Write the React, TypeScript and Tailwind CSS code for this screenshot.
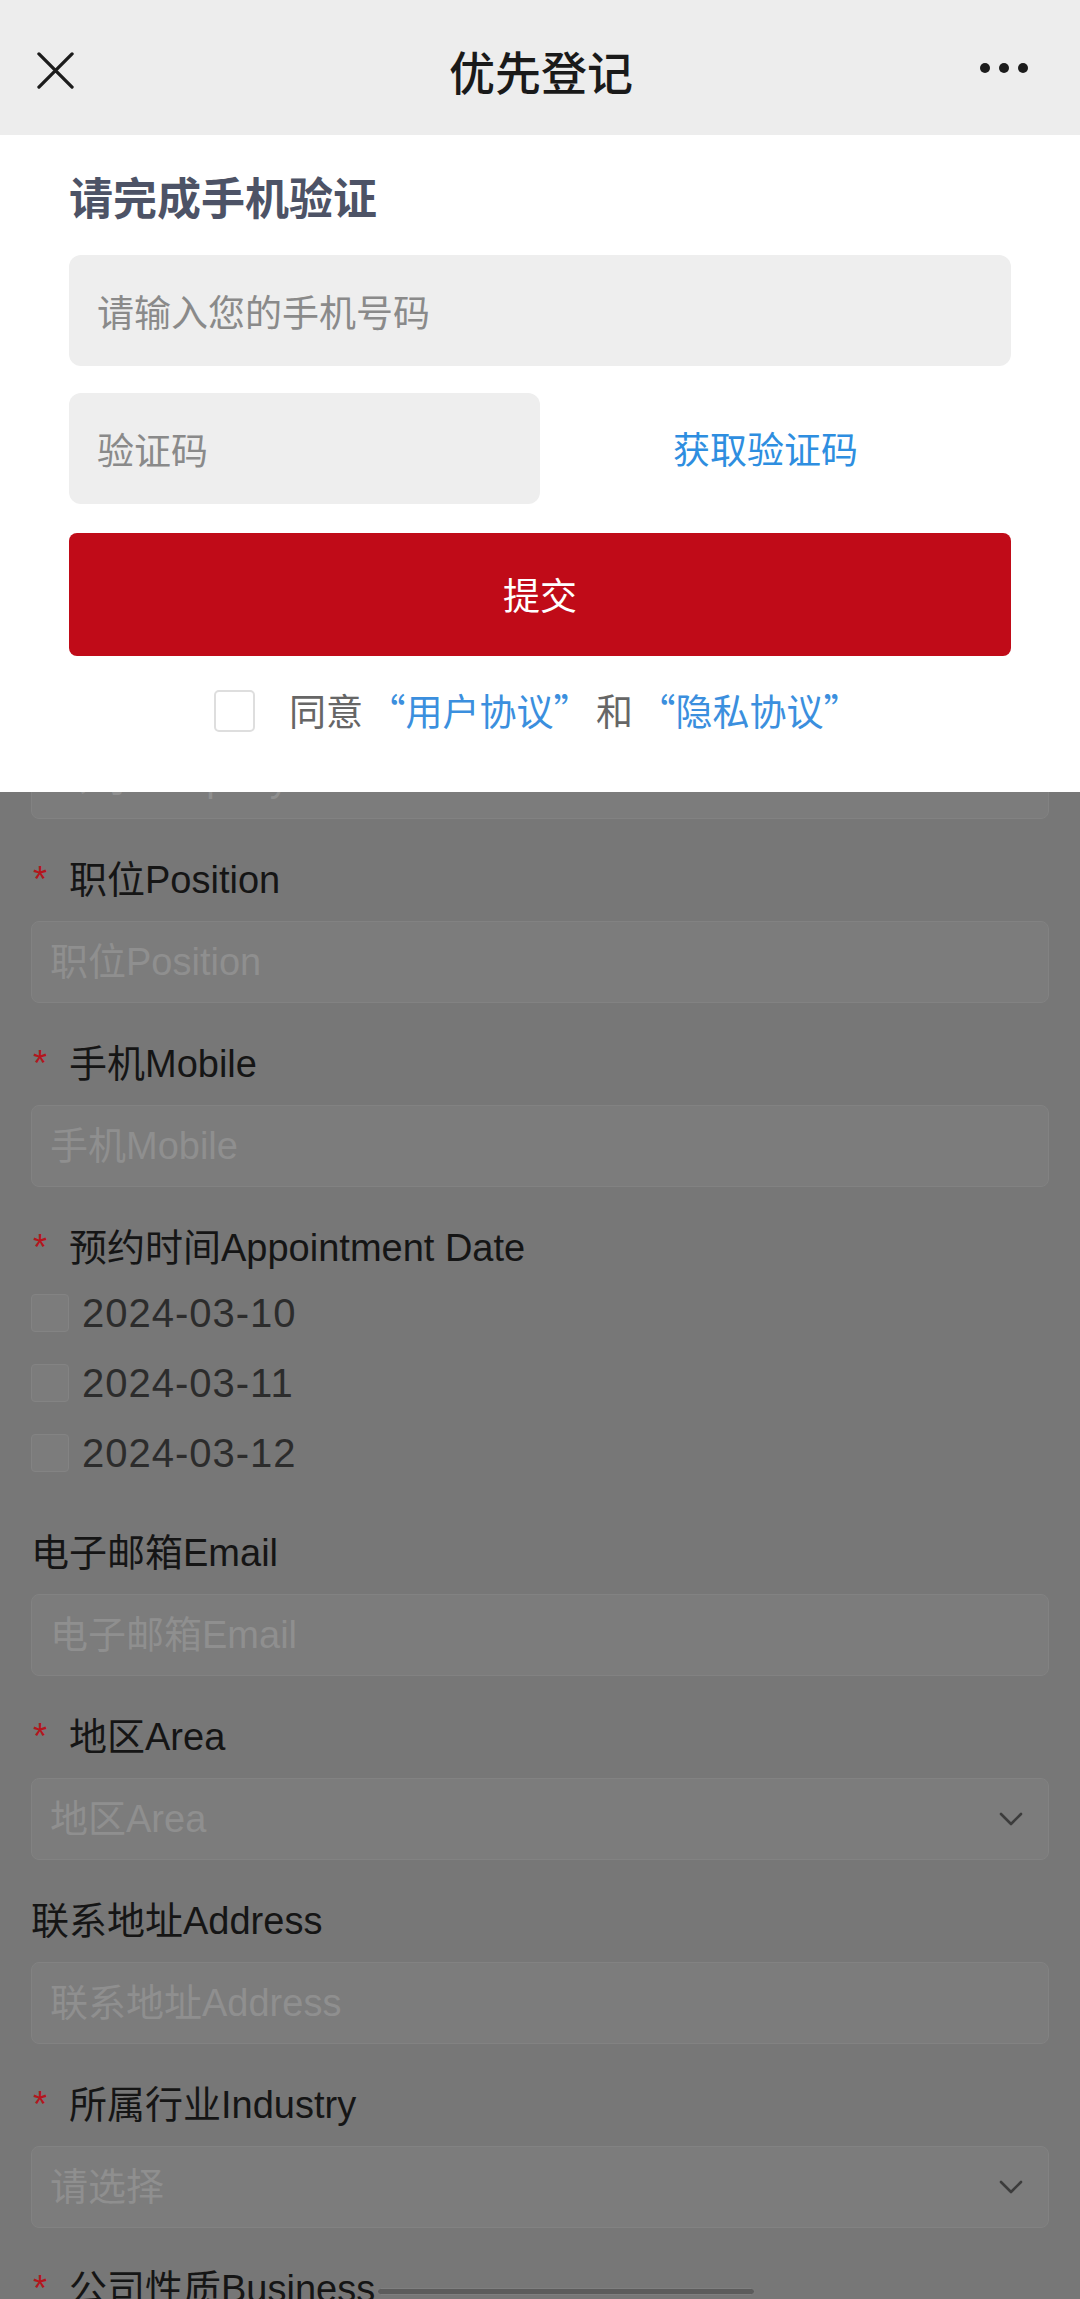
type Field = {
  label: string;
  required?: boolean;
  placeholder?: string;
  select?: boolean;
};

const topFields: Field[] = [
  { label: "姓名Name", required: true },
  { label: "部门Department" },
  { label: "公司Company", required: true },
  { label: "职位Position", required: true },
  { label: "手机Mobile", required: true },
];

const bottomFields: Field[] = [
  { label: "电子邮箱Email" },
  { label: "地区Area", required: true, select: true },
  { label: "联系地址Address" },
  { label: "所属行业Industry", required: true, select: true, placeholder: "请选择" },
  { label: "公司性质Business", required: true, select: true, placeholder: "请选择" },
];

const dates = ["2024-03-10", "2024-03-11", "2024-03-12"];

function Label({ text, required }: { text: string; required?: boolean }) {
  return (
    <div className="flex h-[48px] items-start">
      {required && (
        <span className="w-[38px] shrink-0 pl-[2px] text-[36px] leading-[48px] text-[#b3161d]">*</span>
      )}
      <span className="text-[38px] leading-[48px] text-[#151515]">{text}</span>
    </div>
  );
}

function FormField({ field }: { field: Field }) {
  const ph = field.placeholder ?? field.label;
  return (
    <div className="mb-[37px]">
      <Label text={field.label} required={field.required} />
      <div className="mt-[17px] flex h-[82px] items-center rounded-[8px] border border-[#828282] bg-[#7c7c7c] pl-[18px] pr-[25px]">
        <input
          readOnly
          placeholder={ph}
          className="min-w-0 flex-1 bg-transparent text-[38px] outline-none placeholder:text-[#8f8f8f]"
        />
        {field.select && (
          <svg width="24" height="15" viewBox="0 0 24 15">
            <polyline points="2,2 12,12 22,2" fill="none" stroke="#3c3c3c" strokeWidth="2.6" strokeLinecap="round" strokeLinejoin="round" />
          </svg>
        )}
      </div>
    </div>
  );
}

function Quote({ children, side }: { children: string; side: "open" | "close" }) {
  return (
    <span className={`inline-block w-[1.15em] ${side === "open" ? "text-right" : "text-left"}`}>{children}</span>
  );
}

export default function App() {
  return (
    <div className="relative h-[2299px] w-[1080px] overflow-hidden bg-[#777777] font-['Liberation_Sans','Noto_Sans_CJK_SC',sans-serif]">
      {/* nav bar */}
      <header className="grid h-[135px] grid-cols-[1fr_auto_1fr] items-center bg-[#ededed] pl-[37px] pr-[35px]">
        <svg width="37" height="37" viewBox="0 0 38 38" className="mt-[6px]">
          <path d="M2 2 L36 36 M36 2 L2 36" stroke="#1c1c1c" strokeWidth="3.4" strokeLinecap="round" />
        </svg>
        <h1 className="pt-[6px] text-[46px] font-medium text-[#1a1a1a] font-['Noto_Sans_CJK_SC',sans-serif]">优先登记</h1>
        <div className="flex justify-end gap-[9px] pr-[17px]">
          <span className="h-[10px] w-[10px] rounded-full bg-[#1c1c1c]" />
          <span className="h-[10px] w-[10px] rounded-full bg-[#1c1c1c]" />
          <span className="h-[10px] w-[10px] rounded-full bg-[#1c1c1c]" />
        </div>
      </header>

      {/* page form, dimmed */}
      <main className="px-[31px] pt-[169px]">
        {topFields.map((f) => (
          <FormField key={f.label} field={f} />
        ))}

        <div className="mb-[41px]">
          <Label text="预约时间Appointment Date" required />
          <div className="mt-[6px]">
            {dates.map((d) => (
              <label key={d} className="flex h-[70px] items-center gap-[13px]">
                <span className="h-[38px] w-[38px] rounded-[4px] border border-[#838383] bg-[#7c7c7c]" />
                <span className="text-[40px] tracking-[1px] text-[#2c2c2c]">{d}</span>
              </label>
            ))}
          </div>
        </div>

        {bottomFields.map((f) => (
          <FormField key={f.label} field={f} />
        ))}
      </main>

      {/* verification sheet */}
      <section className="absolute left-0 right-0 top-[135px] bg-white px-[69px] pb-[51px] pt-[31px] font-['Noto_Sans_CJK_SC',sans-serif]">
        <h2 className="text-[44px] font-bold leading-[60px] text-[#4d5366]">请完成手机验证</h2>
        <input
          readOnly
          placeholder="请输入您的手机号码"
          className="mt-[29px] block h-[111px] w-full rounded-[12px] bg-[#eeeeee] px-[28px] text-[37px] outline-none placeholder:text-[#8a8a8a]"
        />
        <div className="mt-[27px] flex items-center">
          <input
            readOnly
            placeholder="验证码"
            className="block h-[111px] w-[471px] rounded-[12px] bg-[#eeeeee] px-[28px] text-[37px] outline-none placeholder:text-[#8a8a8a]"
          />
          <button className="flex-1 pr-[20px] text-center text-[37px] text-[#2e8ee0]">获取验证码</button>
        </div>
        <button className="mt-[29px] flex h-[123px] w-full items-center justify-center rounded-[8px] bg-[#c00b18] text-[37px] text-white">
          提交
        </button>
        <div className="mt-[25px] flex h-[60px] items-center justify-center">
          <span className="h-[42px] w-[41px] rounded-[5px] border-2 border-[#dedede]" />
          <p className="ml-[34px] whitespace-nowrap text-[37px] text-[#666666]">
            同意
            <span className="text-[#3b8fde]">
              <Quote side="open">“</Quote>用户协议<Quote side="close">”</Quote>
            </span>
            和
            <span className="text-[#3b8fde]">
              <Quote side="open">“</Quote>隐私协议<Quote side="close">”</Quote>
            </span>
          </p>
        </div>
      </section>

      {/* scroll indicator */}
      <div className="absolute bottom-[4px] left-[377px] h-[7px] w-[378px] rounded-full border border-[#7f7f7f] bg-[#5c5c5c]" />
    </div>
  );
}
